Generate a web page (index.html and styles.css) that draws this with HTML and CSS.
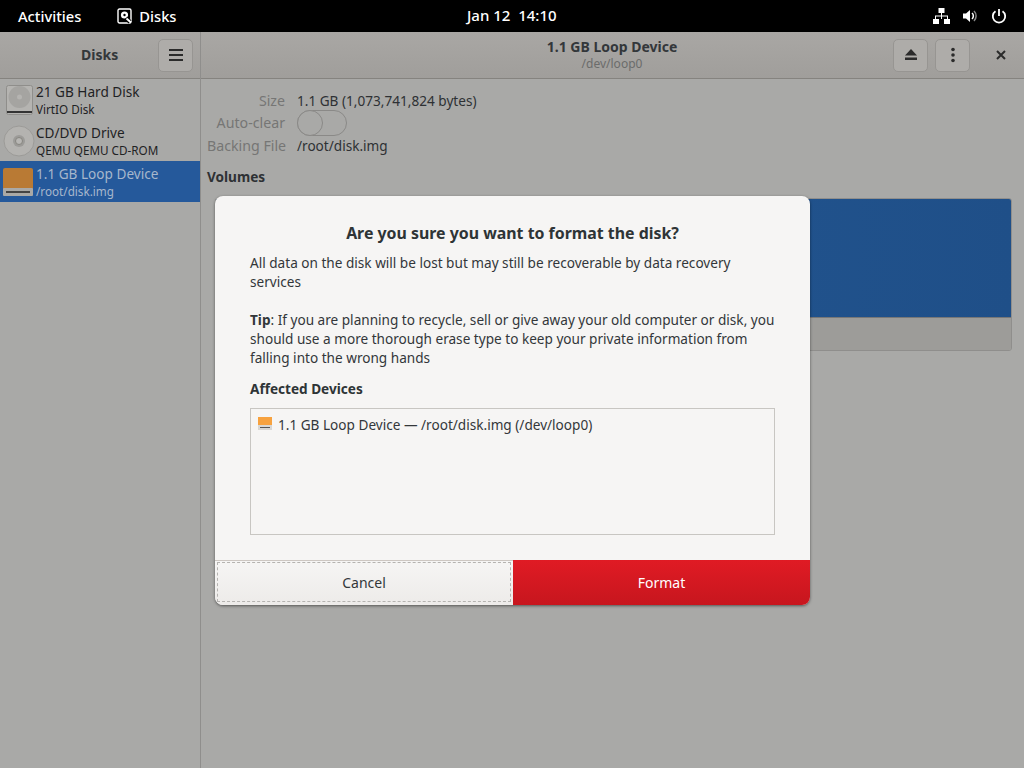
FILE: index.html
```html
<!DOCTYPE html>
<html lang="en">
<head>
  <meta charset="UTF-8" />
  <title>Disks</title>
  <link rel="stylesheet" href="styles.css">
</head>
<body>
  <div id="topbar">
    <div class="top-left">
      <span class="top-item">Activities</span>
      <span class="top-item app-menu">
        <svg width="16" height="16" viewBox="0 0 16 16">
          <rect x="1" y="1" width="13" height="14" rx="1.5" fill="none" stroke="#fff" stroke-width="1.4"/>
          <circle cx="7.5" cy="7" r="3.6" fill="#fff"/>
          <circle cx="7.5" cy="7" r="1.2" fill="#000"/>
          <path d="M9 10l4 4" stroke="#000" stroke-width="4"/>
          <path d="M9.5 10.5l4.5 4" stroke="#fff" stroke-width="2"/>
        </svg>
        Disks
      </span>
    </div>
    <div class="top-clock">Jan 12&nbsp;&nbsp;14:10</div>
    <div class="top-right">
      <svg width="17" height="16" viewBox="0 0 17 16" fill="#fff">
        <rect x="5.500" y="0" width="6" height="5"/>
        <rect x="0" y="11" width="6" height="5"/>
        <rect x="11" y="11" width="6" height="5"/>
        <path d="M8 5h1v2.500h6V11h-1V8.500H9V11H8V8.500H3V11H2V7.500h6z"/>
      </svg>
      <svg width="17" height="16" viewBox="0 0 17 16" fill="#fff">
        <path d="M1 5.500h3L8 2v12l-4-3.500H1z"/>
        <path d="M10 5a4 4 0 0 1 0 6" fill="none" stroke="#fff" stroke-width="1.500"/>
        <path d="M12 3a7 7 0 0 1 0 10" fill="none" stroke="#888" stroke-width="1.500"/>
      </svg>
      <svg width="16" height="16" viewBox="0 0 16 16" fill="none" stroke="#fff" stroke-width="1.800">
        <path d="M4.500 3.300a6.200 6.200 0 1 0 7 0"/>
        <path d="M8 1v7"/>
      </svg>
    </div>
  </div>

  <div id="window">
    <div id="sidebar">
      <div class="side-header">
        <span class="side-title">Disks</span>
        <button class="hbtn menu-btn">
          <svg width="16" height="16" viewBox="0 0 16 16" fill="#2b2b2b">
            <rect x="1" y="2" width="14" height="2"/>
            <rect x="1" y="7" width="14" height="2"/>
            <rect x="1" y="12" width="14" height="2"/>
          </svg>
        </button>
      </div>
      <div class="disk-row">
        <svg class="disk-icon" width="32" height="32" viewBox="0 0 32 32">
          <rect x="3.500" y="1.500" width="26" height="29" rx="2" fill="#b5b4b1" stroke="#8f8e8b"/>
          <circle cx="16.500" cy="13" r="11" fill="#a5a4a1"/>
          <circle cx="16.500" cy="13" r="2.500" fill="#b5b4b1"/>
          <rect x="4" y="27" width="25" height="2" fill="#333"/>
        </svg>
        <div class="disk-text">
          <div class="disk-name">21 GB Hard Disk</div>
          <div class="disk-sub">VirtIO Disk</div>
        </div>
      </div>
      <div class="disk-row">
        <svg class="disk-icon" width="32" height="32" viewBox="0 0 32 32">
          <circle cx="16" cy="16" r="15" fill="#b4b3b0" stroke="#9c9b98"/>
          <circle cx="16" cy="16" r="6" fill="#9c9b98"/>
          <circle cx="16" cy="16" r="3.500" fill="#b8b7b4" stroke="#86857f"/>
        </svg>
        <div class="disk-text">
          <div class="disk-name">CD/DVD Drive</div>
          <div class="disk-sub">QEMU QEMU CD-ROM</div>
        </div>
      </div>
      <div class="disk-row selected">
        <svg class="disk-icon" width="32" height="32" viewBox="0 0 32 32">
          <path d="M0 4a2 2 0 0 1 2-2h26a2 2 0 0 1 2 2v19H0z" fill="#b97a34"/>
          <rect x="0" y="22" width="30" height="8" rx="1" fill="#aaa9a6"/>
          <rect x="3" y="25" width="24" height="2" fill="#444"/>
        </svg>
        <div class="disk-text">
          <div class="disk-name">1.1 GB Loop Device</div>
          <div class="disk-sub">/root/disk.img</div>
        </div>
      </div>
    </div>

    <div id="main">
      <div class="main-header">
        <div class="main-title">
          <div class="title-big">1.1 GB Loop Device</div>
          <div class="title-small">/dev/loop0</div>
        </div>
        <div class="main-actions">
          <button class="hbtn">
            <svg width="16" height="16" viewBox="0 0 16 16" fill="#2b2b2b">
              <path d="M8 2l6 6.500H2z"/>
              <rect x="2" y="10.500" width="12" height="2.500"/>
            </svg>
          </button>
          <button class="hbtn">
            <svg width="16" height="16" viewBox="0 0 16 16" fill="#2b2b2b">
              <circle cx="8" cy="2.500" r="1.800"/>
              <circle cx="8" cy="8" r="1.800"/>
              <circle cx="8" cy="13.500" r="1.800"/>
            </svg>
          </button>
          <span class="close-x">
            <svg width="10" height="10" viewBox="0 0 10 10" stroke="#2b2b2b" stroke-width="2">
              <path d="M1 1l8 8M9 1l-8 8"/>
            </svg>
          </span>
        </div>
      </div>
      <div class="main-body">
        <div class="props">
          <div class="prop-label">Size</div>
          <div class="prop-value">1.1 GB (1,073,741,824 bytes)</div>
          <div class="prop-label">Auto-clear</div>
          <div class="toggle"><div class="knob"></div></div>
          <div class="prop-label">Backing File</div>
          <div class="prop-value">/root/disk.img</div>
        </div>
        <div class="volumes-title">Volumes</div>
        <div class="volume-box">
          <div class="volume-blue"></div>
          <div class="volume-grey"></div>
        </div>
      </div>
    </div>
  </div>

  <div id="dialog">
    <div class="dialog-body">
      <h1>Are you sure you want to format the disk?</h1>
      <p class="warn">All data on the disk will be lost but may still be recoverable by data recovery services</p>
      <p class="tip"><b>Tip</b>: If you are planning to recycle, sell or give away your old computer or disk, you should use a more thorough erase type to keep your private information from falling into the wrong hands</p>
      <div class="affected">Affected Devices</div>
      <div class="device-list">
        <svg width="16" height="16" viewBox="0 0 16 16">
          <rect x="1" y="1" width="14" height="9" fill="#f7a23f"/>
          <rect x="1" y="9" width="14" height="5" fill="#d8d7d4"/>
          <rect x="3" y="11" width="10" height="1" fill="#555"/>
        </svg>
        <span>1.1 GB Loop Device — /root/disk.img (/dev/loop0)</span>
      </div>
    </div>
    <div class="dialog-buttons">
      <button class="btn-cancel"><span class="focus-ring">Cancel</span></button>
      <button class="btn-format">Format</button>
    </div>
  </div>
</body>
</html>
```

FILE: styles.css
```css
* {
  box-sizing: border-box;
}
html, body {
  height: 100%;
}
body {
  margin: 0;
  width: 1024px;
  height: 768px;
  overflow: hidden;
  font-family: "Noto Sans", sans-serif;
  font-size: 13.6px;
  color: #2e3436;
  background: #a9a9a7;
  position: relative;
}
button {
  font-family: inherit;
  font-size: 14px;
  padding: 0;
}

#topbar {
  height: 32px;
  background: #000;
  color: #fff;
  display: flex;
  align-items: center;
  justify-content: space-between;
  font-weight: 500;
  font-size: 14.700px;
  position: relative;
}
.top-left {
  display: flex;
  align-items: center;
  padding-left: 18px;
  padding-bottom: 1px;
  gap: 36px;
}
.top-item {
  display: flex;
  align-items: center;
  gap: 6px;
}
.top-clock {
  position: absolute;
  left: 467px;
  top: 5px;
  font-size: 15px;
}
.top-right {
  display: flex;
  align-items: center;
  gap: 12px;
  padding-right: 17px;
}

#window {
  display: flex;
  height: 736px;
}
#sidebar {
  width: 201px;
  border-right: 1px solid #8f8e8c;
  flex-shrink: 0;
}
.side-header {
  height: 47px;
  background: linear-gradient(#a9a7a4, #a09e9b);
  border-bottom: 1px solid #85837f;
  display: flex;
  align-items: center;
  justify-content: flex-end;
  padding-right: 7px;
  position: relative;
}
.side-title {
  position: absolute;
  left: 81px;
  top: 13px;
  font-size: 14px;
  font-weight: 700;
  color: #33373a;
}
.hbtn {
  width: 35px;
  height: 33px;
  border: 1px solid #979592;
  border-radius: 5px;
  background: #aeaca9;
  display: flex;
  align-items: center;
  justify-content: center;
}
.disk-row {
  height: 41px;
  display: flex;
  align-items: center;
  padding-left: 3px;
  gap: 1px;
}
.disk-icon {
  flex-shrink: 0;
}
.disk-name {
  line-height: 19px;
  color: #1f2224;
}
.disk-sub {
  font-size: 11.700px;
  line-height: 16px;
  color: #1f2224;
}
.disk-row.selected {
  background: #25599b;
}
.selected .disk-name, .selected .disk-sub {
  color: #a7b7cc;
}

#main {
  flex: 1;
  min-width: 0;
}
.main-header {
  height: 47px;
  background: linear-gradient(#a9a7a4, #a09e9b);
  border-bottom: 1px solid #85837f;
  position: relative;
  display: flex;
  align-items: center;
  justify-content: flex-end;
}
.main-title {
  position: absolute;
  left: 223px;
  width: 376px;
  text-align: center;
}
.title-big {
  font-weight: 700;
  font-size: 14px;
  line-height: 18px;
  margin-top: -1px;
  color: #33373a;
}
.title-small {
  font-size: 12px;
  line-height: 16px;
  color: #6b6c6b;
}
.main-actions {
  display: flex;
  align-items: center;
  gap: 7px;
  padding-right: 18px;
}
.close-x {
  width: 10px;
  margin-left: 19px;
  display: flex;
}
.main-body {
  padding: 10px 12px 0 6px;
}
.props {
  display: grid;
  grid-template-columns: 78px 1fr;
  grid-auto-rows: 22.500px;
  column-gap: 12px;
  align-items: center;
}
.prop-label {
  text-align: right;
  font-size: 14.200px;
  color: #767675;
  white-space: nowrap;
}
.prop-value {
  color: #2e3134;
}
.toggle {
  width: 50px;
  height: 26px;
  border: 1px solid #8a8987;
  border-radius: 13px;
  position: relative;
}
.knob {
  position: absolute;
  left: -1px;
  top: -1px;
  width: 26px;
  height: 26px;
  border: 1px solid #8a8987;
  border-radius: 50%;
  background: #a9a9a7;
}
.volumes-title {
  font-weight: 700;
  color: #2e3134;
  margin-top: 10px;
  line-height: 19px;
}
.volume-box {
  margin-top: 12.500px;
  margin-left: 8px;
  height: 153px;
  width: 797px;
  border: 1px solid #8f8e8c;
  border-radius: 3px;
  overflow: hidden;
}
.volume-blue {
  height: 119px;
  background: radial-gradient(circle at 40% 50%, #225590, #1f4f88);
  border-bottom: 1px solid #777;
}
.volume-grey {
  height: 33px;
  background: #9d9c99;
}

#dialog {
  position: absolute;
  left: 215px;
  top: 196px;
  width: 595px;
  height: 409px;
  background: #f6f5f4;
  border-radius: 8px;
  box-shadow: 0 1px 3px rgba(0,0,0,0.5);
  display: flex;
  flex-direction: column;
  overflow: hidden;
}
.dialog-body {
  flex: 1;
  padding: 25px 35px 0 35px;
}
h1 {
  margin: 0 0 8px;
  text-align: center;
  font-size: 15.900px;
  line-height: 24px;
  font-weight: 700;
  color: #2e3436;
}
.warn, .tip {
  margin: 0;
  line-height: 19px;
  color: #33373a;
}
.tip {
  margin-top: 19px;
}
.affected {
  font-weight: 700;
  margin-top: 12px;
  line-height: 19px;
}
.device-list {
  margin-top: 10px;
  height: 127px;
  border: 1px solid #c8c6c2;
  padding: 7px 6px;
  display: flex;
  align-items: flex-start;
  gap: 5px;
  line-height: 18px;
  color: #33373a;
}
.dialog-buttons {
  height: 45px;
  display: flex;
}
.btn-cancel {
  width: 298px;
  border: none;
  border-top: 1px solid #cdc7c2;
  background: linear-gradient(#f6f5f4, #edebe9);
  padding: 1px 2px 3px;
  color: #33373a;
}
.focus-ring {
  display: flex;
  align-items: center;
  justify-content: center;
  height: 100%;
  border: 1px dashed #b5b3b0;
}
.btn-format {
  flex: 1;
  border: none;
  background: linear-gradient(#e01b24, #c7161e);
  color: #fff;
}
```
